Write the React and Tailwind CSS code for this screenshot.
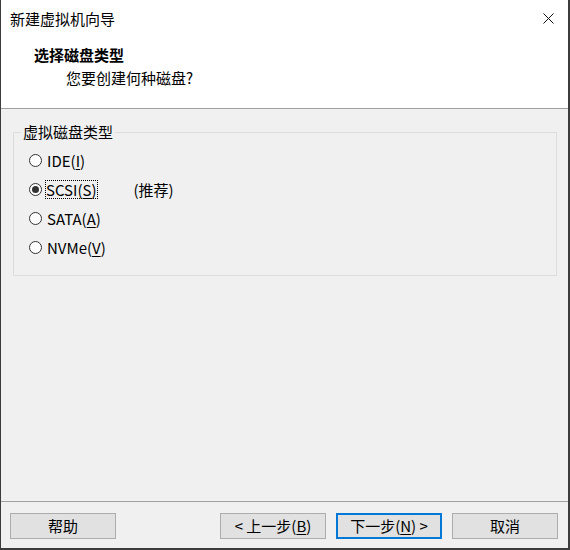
const font = { fontFamily: '"Noto Sans CJK SC", "Noto Sans", sans-serif' };

function Radio({ checked, children, extra }) {
  return (
    <div className="flex h-[29px] items-center">
      <span className="flex h-[13px] w-[13px] items-center justify-center rounded-full border border-[#333333] bg-white">
        {checked && <span className="h-[7px] w-[7px] rounded-full bg-[#333333]" />}
      </span>
      <span
        className={
          checked
            ? 'ml-[3px] border border-dotted border-black px-0 leading-[17px]'
            : 'ml-[4px] border border-transparent leading-[17px]'
        }
      >
        {children}
      </span>
      {extra && <span className="ml-[36px] leading-[17px]">{extra}</span>}
    </div>
  );
}

function Key({ children }) {
  return <u className="underline underline-offset-2">{children}</u>;
}

function Button({ children, primary }) {
  return (
    <button
      type="button"
      className={
        primary
          ? 'flex h-[26px] w-[106px] items-center justify-center border-2 border-[#0078d7] bg-[#e1e1e1] text-[15px] leading-[20px] text-black'
          : 'flex h-[26px] w-[106px] items-center justify-center border border-[#adadad] bg-[#e1e1e1] text-[15px] leading-[20px] text-black'
      }
    >
      {children}
    </button>
  );
}

export default function App() {
  return (
    <div
      style={font}
      className="flex h-[550px] w-[570px] flex-col border-b-2 border-l border-r-2 border-[#3c3c3c] bg-[#f0f0f0] text-black"
    >
      <div className="h-[109px] border-b border-[#a0a0a0] bg-white">
        <div className="flex h-[38px] items-center justify-between pl-[9px] pr-[14px]">
          <span className="text-[15px] leading-[20px]">新建虚拟机向导</span>
          <svg width="11" height="11" viewBox="0 0 11 11" className="-mt-[2px]">
            <path d="M0.5 0.5 L10.5 10.5 M10.5 0.5 L0.5 10.5" stroke="#111" strokeWidth="1" fill="none" />
          </svg>
        </div>
        <div className="pl-[33px] pt-[7px]">
          <div className="text-[15px] font-bold leading-[20px]">选择磁盘类型</div>
          <div className="ml-[32px] mt-[3px] text-[15px] leading-[20px]">您要创建何种磁盘?</div>
        </div>
      </div>

      <div className="flex-1">
        <fieldset className="ml-[12px] mt-[13px] h-[154px] w-[544px] border border-[#dcdcdc]">
          <legend className="ml-[7px] px-[2px] text-[15px] leading-[20px]">虚拟磁盘类型</legend>
          <div className="pl-[15px] pt-[4px] text-[15px]">
            <Radio>
              IDE(<Key>I</Key>)
            </Radio>
            <Radio checked extra="(推荐)">
              SCSI(<Key>S</Key>)
            </Radio>
            <Radio>
              SATA(<Key>A</Key>)
            </Radio>
            <Radio>
              NVMe(<Key>V</Key>)
            </Radio>
          </div>
        </fieldset>
      </div>

      <div className="h-px bg-[#a0a0a0]" />
      <div className="flex items-center pb-[9px] pl-[9px] pr-[10px] pt-[11px]">
        <Button>帮助</Button>
        <div className="ml-auto flex gap-[10px]">
          <Button>
            &lt; 上一步(<Key>B</Key>)
          </Button>
          <Button primary>
            下一步(<Key>N</Key>) &gt;
          </Button>
          <Button>取消</Button>
        </div>
      </div>
    </div>
  );
}
